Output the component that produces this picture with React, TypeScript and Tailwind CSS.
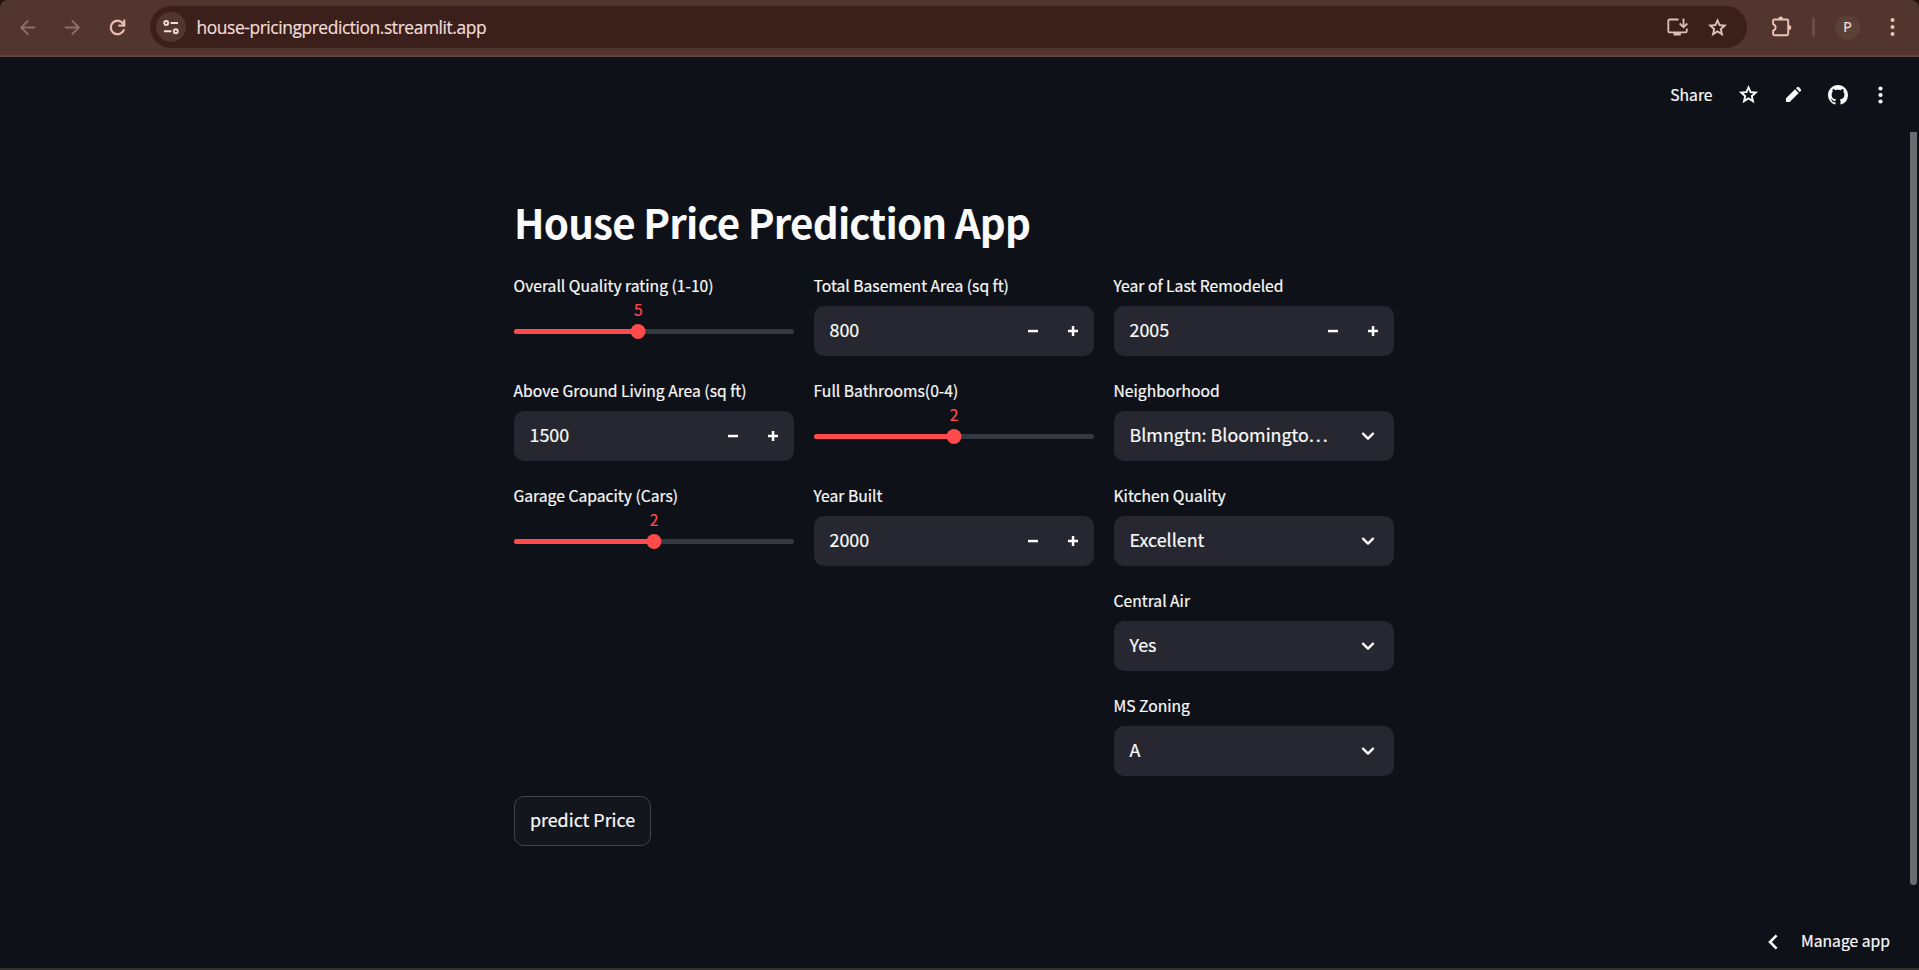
import type { ReactNode } from "react";
import { MdArrowBack, MdArrowForward } from "react-icons/md";

function Field({ label, children }: { label: string; children: ReactNode }) {
  return (
    <div className="flex h-20 flex-col">
      <div className="-ml-[0.5px] h-[30px] whitespace-nowrap text-[15.68px] leading-[20px]">{label}</div>
      {children}
    </div>
  );
}

function Slider({ label, value, fraction }: { label: string; value: number; fraction: number }) {
  const position = `${fraction * 100}%`;
  return (
    <Field label={label}>
      <div className="relative mt-[23px] h-[5px] rounded-full bg-[#363841]">
        <div className="h-full rounded-full bg-[#ff4b4b]" style={{ width: position }} />
        <div
          className="absolute -top-[5px] size-[15px] -translate-x-1/2 rounded-full bg-[#ff4b4b]"
          style={{ left: position }}
        />
        <div
          className="absolute -top-[29px] -translate-x-1/2 text-[15.68px] leading-[20px] text-[#ff4b4b]"
          style={{ left: position }}
        >
          {value}
        </div>
      </div>
    </Field>
  );
}

function NumberInput({ label, value }: { label: string; value: string }) {
  return (
    <Field label={label}>
      <div className="flex h-[50px] items-center rounded-[10px] bg-[#262730] pl-[15.5px]">
        <span className="mb-1 flex-1 text-[17.9px] leading-[46px]">{value}</span>
        <button className="flex h-full w-10 items-center justify-center">
          <svg width="10" height="10" viewBox="0 0 10 10" fill="#fafafa">
            <path d="M0 3.8h10v2.5H0z" />
          </svg>
        </button>
        <button className="mr-px flex h-full w-10 items-center justify-center">
          <svg width="10" height="10" viewBox="0 0 10 10" fill="#fafafa">
            <path d="M3.8 0h2.5v3.8H10v2.5H6.3V10H3.8V6.3H0V3.8h3.8z" />
          </svg>
        </button>
      </div>
    </Field>
  );
}

function Select({ label, value, shortened = false }: { label: string; value: string; shortened?: boolean }) {
  return (
    <Field label={label}>
      <div className="flex h-[50px] items-center rounded-[10px] bg-[#262730] pl-[15.5px] pr-[19px]">
        <span className="mb-1 whitespace-nowrap text-[17.9px] leading-[46px]">
          {value}
          {shortened && <span className="tracking-[2px]">...</span>}
        </span>
        <svg className="ml-auto" width="14" height="10" viewBox="0 0 14 10" fill="none">
          <path
            d="M2 2.7l5 4.9 5-4.9"
            stroke="#fafafa"
            strokeWidth="2.4"
            strokeLinecap="round"
            strokeLinejoin="round"
          />
        </svg>
      </div>
    </Field>
  );
}

function Star({ size, className }: { size: number; className: string }) {
  return (
    <svg className={className} width={size} height={size} viewBox="0 -960 960 960" fill="currentColor">
      <path d="m354-287 126-76 126 77-33-144 111-96-146-13-58-136-58 135-146 13 111 97-33 143ZM233-120l65-281L80-590l288-25 112-265 112 265 288 25-218 189 65 281-247-149-247 149Z" />
    </svg>
  );
}

function BrowserBar() {
  return (
    <div className="bg-[#241411]">
      <div className="flex h-[57px] items-start rounded-t-[8px] border-b-2 border-[#5f463f] bg-[#52352f]">
        <div className="flex h-[54px] items-center pl-4 text-[#8f6e68]">
          <MdArrowBack size={23} />
          <MdArrowForward size={23} className="ml-[22px]" />
          <svg
            className="ml-[22px] text-[#edc1b6]"
            width="23"
            height="23"
            viewBox="0 -960 960 960"
            fill="currentColor"
            stroke="currentColor"
            strokeWidth="12"
          >
            <path d="M480-160q-134 0-227-93t-93-227q0-134 93-227t227-93q69 0 132 28.500T720-690v-110h80v280H520v-80h168q-32-56-87.500-88T480-720q-100 0-170 70t-70 170q0 100 70 170t170 70q77 0 139-44t87-116h84q-28 106-114 173t-196 67Z" />
          </svg>
        </div>
        <div className="ml-[21px] mt-[6px] flex h-[42px] w-[1597px] items-center rounded-full bg-[#3a1f1b] pl-[6px] pr-5">
          <div className="flex size-[30px] items-center justify-center rounded-full bg-[#52352f]">
            <svg width="16" height="16" viewBox="0 0 16 16" fill="none" stroke="#f3dcd6" strokeWidth="1.9">
              <circle cx="3.2" cy="4" r="2" />
              <path d="M7.6 4H15M1 12.2h7.400" />
              <circle cx="12.8" cy="12.2" r="2" />
            </svg>
          </div>
          <span className="ml-[10.5px] font-['Open_Sans','Noto_Sans',sans-serif] text-[17.4px] leading-[24px] tracking-[-0.42px] text-[#f3dcd6]">
            house-pricingprediction.streamlit.app
          </span>
          <svg
            className="ml-auto mr-[17px]"
            width="22"
            height="18"
            viewBox="0 0 22 18"
            fill="none"
            stroke="#d9c1bb"
            strokeWidth="1.8"
          >
            <path d="M11.500 1.500H2.600Q1.300 1.500 1.300 2.800V13q0 1.300 1.300 1.300h15.900q1.300 0 1.300-1.300v-2.600" />
            <path d="M16.500 .5V9M12.700 5.500l3.800 3.800 3.800-3.800" />
            <path d="M6.500 14.300h7.300v3.200H6.500z" fill="#d9c1bb" stroke="none" />
          </svg>
          <Star size={23} className="-mr-[2px] text-[#d9c1bb]" />
        </div>
        <div className="flex h-[54px] items-center">
          <svg
            className="ml-[23px]"
            width="23"
            height="23"
            viewBox="0 0 23 23"
            fill="none"
            stroke="#edc1b6"
            strokeWidth="1.9"
            strokeLinejoin="round"
          >
            <path d="M4.200 3.500h12.900q1.100 0 1.100 1.100v13.500q0 1.100-1.100 1.100H4.200q-1.100 0-1.100-1.100v-3.400q2.500-.9 2.500-3.200T3.100 8.200V4.600q0-1.100 1.100-1.100z" />
            <path d="M8.300 3.200a2.400 2.600 0 0 1 4.800 0zM18.700 9a2.600 2.500 0 0 1 0 5z" fill="#edc1b6" stroke="none" />
          </svg>
          <div className="ml-[19px] h-5 w-[3px] rounded-sm bg-[#6f4d47]" />
          <div className="ml-5 flex size-[25px] items-center justify-center rounded-full bg-[#5b4037] pb-px font-['Open_Sans',sans-serif] text-[14px] text-[#f6e6e1]">
            P
          </div>
          <svg className="ml-[30px]" width="5" height="18" viewBox="0 0 5 18" fill="#edc1b6">
            <circle cx="2.5" cy="2" r="2" />
            <circle cx="2.5" cy="9" r="2" />
            <circle cx="2.5" cy="16" r="2" />
          </svg>
        </div>
      </div>
    </div>
  );
}

export default function App() {
  return (
    <div className="relative flex h-[970px] w-[1919px] flex-col overflow-hidden border-b-2 border-[#33322f] bg-[#0e1117] font-['Noto_Sans_CJK_SC',sans-serif] text-[#fafafa] [-webkit-text-stroke:0.2px]">
      <BrowserBar />
      <header className="flex h-[75px] items-center justify-end pr-[36px]">
        <span className="text-[15.68px] leading-[20px]">Share</span>
        <Star size={23} className="ml-[24px]" />
        <svg className="ml-[24px]" width="19" height="19" viewBox="0 0 20 20" fill="#fafafa">
          <path d="M2 17.200v-2.400q0-.6.4-1L11.600 4.500l3.900 3.900-9.200 9.200q-.4.4-1 .4H2.800q-.8 0-.8-.8z" />
          <path d="M12.700 3.400l1.100-1.100q.9-.8 1.800 0l2.100 2.100q.8.900 0 1.800l-1.100 1.100z" />
        </svg>
        <svg className="ml-[25.5px]" width="20" height="20" viewBox="0 0 16 16" fill="#fafafa">
          <path d="M8 0C3.580 0 0 3.580 0 8c0 3.540 2.290 6.530 5.470 7.590.4.070.55-.17.55-.38 0-.19-.01-.82-.01-1.490-2.010.37-2.530-.49-2.690-.94-.09-.23-.48-.94-.82-1.130-.28-.15-.68-.52-.01-.53.63-.01 1.080.58 1.230.82.72 1.210 1.870.87 2.330.66.07-.52.28-.87.51-1.070-1.780-.2-3.640-.89-3.640-3.950 0-.87.31-1.590.82-2.150-.08-.2-.36-1.020.08-2.120 0 0 .67-.21 2.200.82.64-.18 1.320-.27 2-.27s1.360.09 2 .27c1.530-1.040 2.200-.82 2.200-.82.44 1.100.16 1.920.08 2.120.51.56.82 1.270.82 2.150 0 3.070-1.870 3.750-3.650 3.950.29.25.54.73.54 1.480 0 1.070-.01 1.930-.01 2.200 0 .21.15.46.55.38A8.010 8.010 0 0 0 16 8c0-4.420-3.580-8-8-8z" />
        </svg>
        <svg className="ml-[30px]" width="5" height="18" viewBox="0 0 5 18" fill="#fafafa">
          <circle cx="2.500" cy="2.500" r="2.100" />
          <circle cx="2.500" cy="9" r="2.100" />
          <circle cx="2.500" cy="15.500" r="2.100" />
        </svg>
      </header>
      <main className="ml-[514px] w-[880px]">
        <h1 className="mt-[60px] h-[84px] whitespace-nowrap text-[40.3px] font-bold leading-[60px] tracking-[-0.79px] [-webkit-text-stroke:0]">
          House Price Prediction App
        </h1>
        <div className="grid grid-cols-3 gap-5">
          <div className="flex flex-col gap-[25px]">
            <Slider label="Overall Quality rating (1-10)" value={5} fraction={4 / 9} />
            <NumberInput label="Above Ground Living Area (sq ft)" value="1500" />
            <Slider label="Garage Capacity (Cars)" value={2} fraction={0.5} />
          </div>
          <div className="flex flex-col gap-[25px]">
            <NumberInput label="Total Basement Area (sq ft)" value="800" />
            <Slider label="Full Bathrooms(0-4)" value={2} fraction={0.5} />
            <NumberInput label="Year Built" value="2000" />
          </div>
          <div className="flex flex-col gap-[25px]">
            <NumberInput label="Year of Last Remodeled" value="2005" />
            <Select label="Neighborhood" value="Blmngtn: Bloomingto" shortened />
            <Select label="Kitchen Quality" value="Excellent" />
            <Select label="Central Air" value="Yes" />
            <Select label="MS Zoning" value="A" />
          </div>
        </div>
        <button className="mt-5 flex h-[50px] w-[137px] items-center justify-center rounded-[10px] border border-[#41444c] bg-[#13161d] pb-1 text-[17.9px]">
          predict Price
        </button>
      </main>
      <footer className="mt-auto flex h-[53px] items-center justify-end pr-[29px]">
        <svg width="10" height="16" viewBox="0 0 10 16" fill="none">
          <path d="M8.600 1.300L2 8l6.600 6.700" stroke="#fafafa" strokeWidth="2.600" />
        </svg>
        <span className="mb-[2px] ml-[23px] text-[15.68px] leading-[20px]">Manage app</span>
      </footer>
      <div className="absolute left-[1910px] top-[132px] h-[753px] w-[7px] rounded-b-full bg-[#6b6c70]" />
    </div>
  );
}
